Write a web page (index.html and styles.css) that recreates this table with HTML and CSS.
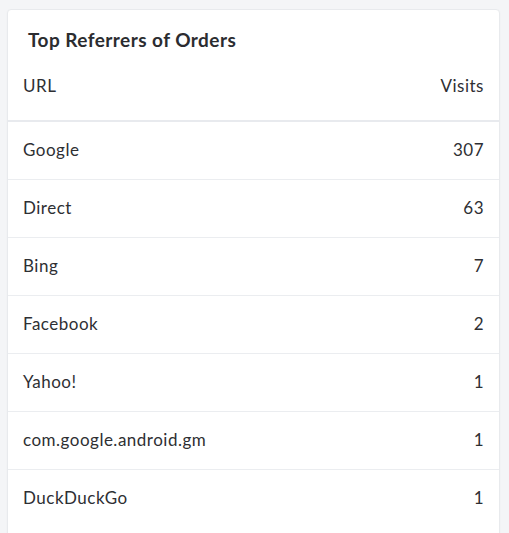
FILE: index.html
```html
<!DOCTYPE html>
<html>
<head>
<meta charset="utf-8">
<link rel="stylesheet" href="styles.css">
</head>
<body>
<div class="card">
  <h2 class="title">Top Referrers of Orders</h2>
  <table class="tbl">
    <thead>
      <tr><th class="l">URL</th><th class="r">Visits</th></tr>
    </thead>
    <tbody>
      <tr><td class="l">Google</td><td class="r">307</td></tr>
      <tr><td class="l">Direct</td><td class="r">63</td></tr>
      <tr><td class="l">Bing</td><td class="r">7</td></tr>
      <tr><td class="l">Facebook</td><td class="r">2</td></tr>
      <tr><td class="l">Yahoo!</td><td class="r">1</td></tr>
      <tr><td class="l">com.google.android.gm</td><td class="r">1</td></tr>
      <tr><td class="l">DuckDuckGo</td><td class="r">1</td></tr>
    </tbody>
  </table>
</div>
</body>
</html>
```
FILE: styles.css
```css
html, body { margin: 0; padding: 0; }
body {
  background: #f4f5f7;
  font-family: Lato, "Open Sans", sans-serif;
  color: #2e2f33;
  padding: 9px 9px 0 7px;
  overflow: hidden;
  height: 533px;
  box-sizing: border-box;
}
.card {
  background: #fff;
  border: 1px solid #e8eaed;
  border-radius: 4px;
  box-shadow: 0 1px 2px rgba(0,0,0,0.04);
  padding-bottom: 40px;
}
.title {
  margin: 0;
  padding: 18px 0 0 20px;
  font-size: 19px;
  line-height: 24px;
  letter-spacing: 0.45px;
  font-weight: 700;
  color: #2b2c30;
}
.tbl {
  width: 100%;
  border-collapse: collapse;
  font-size: 17px;
  letter-spacing: 0.5px;
}
.tbl th {
  font-weight: 400;
  height: 67px;
  line-height: 20px;
  padding: 0 15px 1px;
  border-bottom: 2px solid #e8eaee;
  vertical-align: middle;
}
.tbl td {
  height: 56px;
  line-height: 20px;
  padding: 0 15px 1px;
  border-bottom: 1px solid #ebedf0;
  vertical-align: middle;
}
.tbl tbody tr:last-child td { border-bottom: none; }
.l { text-align: left; }
.r { text-align: right; }
```
